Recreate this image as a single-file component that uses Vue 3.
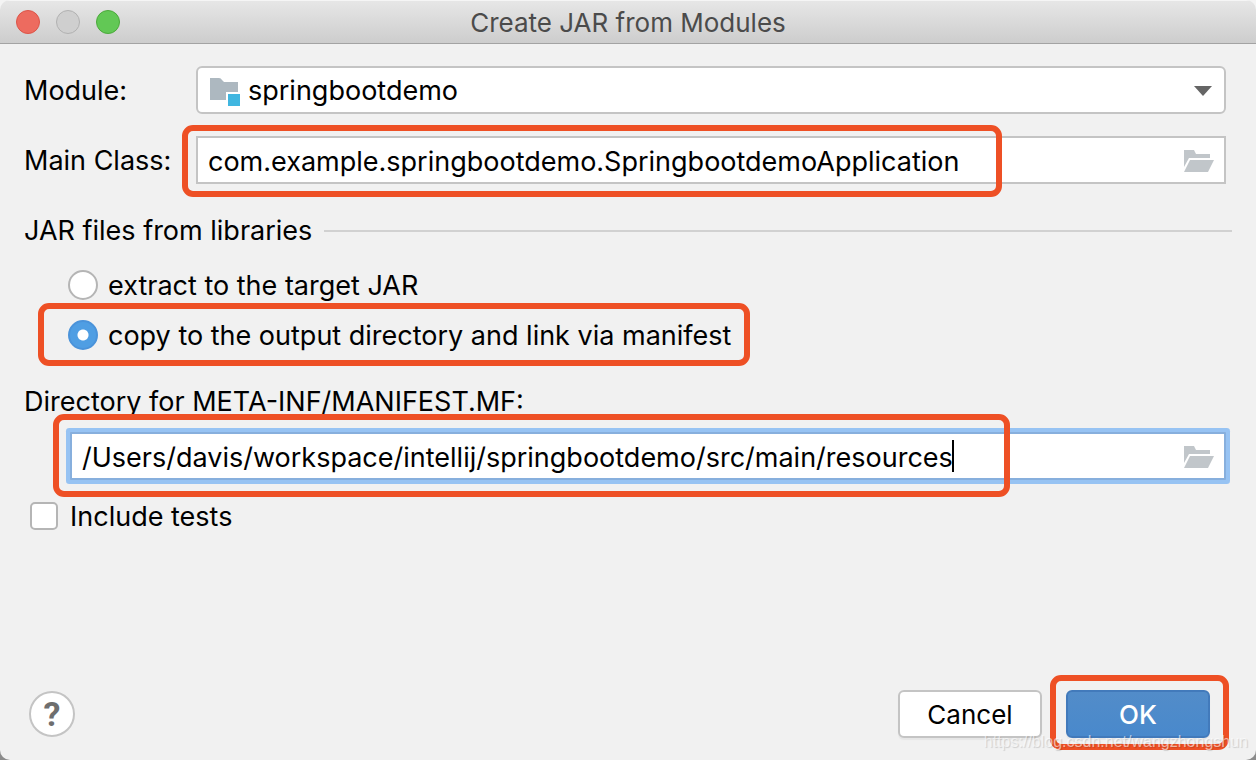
<script setup>
import { ref } from 'vue'

const moduleName = ref('springbootdemo')
const mainClass = ref('com.example.springbootdemo.SpringbootdemoApplication')
const libraryMode = ref('copy')
const manifestDir = ref('/Users/davis/workspace/intellij/springbootdemo/src/main/resources')
const includeTests = ref(false)
</script>

<template>
  <main class="dialog">
    <header class="titlebar">
      <div class="lights">
        <button class="light close" aria-label="Close"></button>
        <button class="light minimize" aria-label="Minimize" disabled></button>
        <button class="light zoom" aria-label="Zoom"></button>
      </div>
      <h1>Create JAR from Modules</h1>
    </header>

    <form class="content" @submit.prevent>
      <div class="row">
        <label for="module">Module:</label>
        <div class="control">
          <select id="module" v-model="moduleName" class="field combo">
            <option>springbootdemo</option>
          </select>
          <svg class="module-icon" viewBox="0 0 30 28" aria-hidden="true">
            <path d="M0 0H9Q11 0 12 2L14 4H28V14H16V22H0Z" fill="#adb8c0" />
            <rect x="18" y="16" width="12" height="12" fill="#40b6e0" />
          </svg>
          <svg class="arrow" viewBox="0 0 18 10" aria-hidden="true">
            <path d="M0 0H18L9 10Z" fill="#656565" />
          </svg>
        </div>
      </div>

      <div class="row">
        <label for="main-class">Main Class:</label>
        <div class="control">
          <input id="main-class" v-model="mainClass" class="field" type="text" spellcheck="false" />
          <button class="browse" type="button" aria-label="Browse main class">
            <svg viewBox="0 0 30 22" aria-hidden="true">
              <path d="M0 0H10L12 4H26V8H5L0 17Z" />
              <path d="M6 10H30L24 22H0Z" />
            </svg>
          </button>
          <span class="mark mark-class"></span>
        </div>
      </div>

      <fieldset class="libraries">
        <legend class="section"><span>JAR files from libraries</span></legend>
        <div class="option">
          <input id="extract" v-model="libraryMode" type="radio" name="mode" value="extract" />
          <label for="extract">extract to the target JAR</label>
        </div>
        <div class="option">
          <input id="copy" v-model="libraryMode" type="radio" name="mode" value="copy" />
          <label for="copy">copy to the output directory and link via manifest</label>
          <span class="mark mark-option"></span>
        </div>
      </fieldset>

      <label class="dir-label" for="manifest-dir">Directory for META-INF/MANIFEST.MF:</label>
      <div class="control dir">
        <input id="manifest-dir" v-model="manifestDir" class="field focused" type="text" spellcheck="false" />
        <span class="caret"></span>
        <button class="browse" type="button" aria-label="Browse directory">
          <svg viewBox="0 0 30 22" aria-hidden="true">
            <path d="M0 0H10L12 4H26V8H5L0 17Z" />
            <path d="M6 10H30L24 22H0Z" />
          </svg>
        </button>
        <span class="mark mark-dir"></span>
      </div>

      <div class="tests">
        <input id="tests" v-model="includeTests" type="checkbox" />
        <label for="tests">Include tests</label>
      </div>

      <footer class="footer">
        <button class="help" type="button" aria-label="Help">?</button>
        <div class="actions">
          <button class="button" type="button">Cancel</button>
          <div class="primary">
            <button class="button ok" type="submit">OK</button>
            <span class="mark mark-ok"></span>
          </div>
        </div>
      </footer>
    </form>
    <span class="watermark">https://blog.csdn.net/wangzhongshun</span>
  </main>
</template>

<style>
body {
  background: linear-gradient(#f4f4f4 50%, #8c8c8c 50%);
}
</style>

<style scoped>
.dialog,
.dialog * {
  box-sizing: border-box;
}

.dialog {
  position: relative;
  display: flex;
  flex-direction: column;
  min-height: 100vh;
  overflow: hidden;
  border-radius: 10px;
  background: #f1f1f1;
  color: #000;
  font: 27px/32px Inter, "Liberation Sans", sans-serif;
}

button,
input,
select {
  margin: 0;
  padding: 0;
  font: inherit;
  color: inherit;
}

.titlebar {
  display: grid;
  grid-template-columns: 1fr auto 1fr;
  align-items: center;
  height: 44px;
  padding: 0 16px;
  border-bottom: 1px solid #a3a3a3;
  background: linear-gradient(#e7e7e7, #cdcdcd);
  box-shadow: inset 0 1px #f5f5f5;
}

.titlebar h1 {
  margin: 0;
  padding-top: 2px;
  font: 26px/32px Inter, "Liberation Sans", sans-serif;
  color: #4b4b4b;
}

.lights {
  display: flex;
  gap: 16px;
}

.light {
  width: 24px;
  height: 24px;
  border: 1px solid;
  border-radius: 50%;
}

.close {
  border-color: #dc5448;
  background: #ed6b5f;
}

.minimize {
  border-color: #b1b1b1;
  background: #cfcfcf;
}

.zoom {
  border-color: #4ba93b;
  background: #62c855;
}

.content {
  display: flex;
  flex: 1;
  flex-direction: column;
  padding: 22px 24px;
}

.row {
  display: grid;
  grid-template-columns: 172px 1fr;
  align-items: center;
  margin: 0 6px 22px 0;
}

.row label,
.option label,
.tests label {
  padding-top: 2px;
}

.control {
  position: relative;
  display: flex;
}

.field {
  flex: 1;
  min-width: 0;
  height: 48px;
  padding: 2px 60px 0 10px;
  border: 2px solid #c4c4c4;
  border-radius: 0;
  outline: none;
  background: #fff;
}

.combo {
  appearance: none;
  padding-left: 50px;
  border-radius: 6px;
}

.module-icon {
  position: absolute;
  left: 14px;
  top: 12px;
  width: 30px;
  height: 28px;
  pointer-events: none;
}

.arrow {
  position: absolute;
  right: 14px;
  top: 20px;
  width: 18px;
  height: 10px;
  pointer-events: none;
}

.browse {
  position: absolute;
  right: 12px;
  top: 14px;
  width: 30px;
  height: 22px;
  border: 0;
  background: none;
}

.browse svg {
  display: block;
  width: 30px;
  height: 22px;
  fill: #c1c6ca;
}

.libraries {
  min-width: 0;
  margin: 0;
  padding: 0;
  border: 0;
}

.section {
  display: flex;
  align-items: center;
  gap: 12px;
  width: 100%;
  height: 50px;
  margin-bottom: 4px;
  padding: 0;
}

.section::after {
  content: "";
  flex: 1;
  height: 2px;
  background: #d1d1d1;
}

.option {
  position: relative;
  display: flex;
  align-items: center;
  gap: 10px;
  width: fit-content;
  height: 50px;
  margin-left: 44px;
}

.option input {
  appearance: none;
  width: 30px;
  height: 30px;
  border: 2px solid #b5b5b5;
  border-radius: 50%;
  background: #fff;
}

.option input:checked {
  border-color: #4a93da;
  background: radial-gradient(circle, #fff 5px, #4f9ee3 6px);
}

.dir-label {
  margin-top: 26px;
}

.dir {
  margin: 14px 6px 0 46px;
}

.focused {
  border-color: #87afdd;
  box-shadow: 0 0 0 4px #97c3f3;
  border-radius: 1px;
}

.caret {
  position: absolute;
  left: 882px;
  top: 8px;
  width: 2px;
  height: 32px;
  background: #000;
}

.tests {
  display: flex;
  align-items: center;
  gap: 12px;
  margin: 19px 0 0 6px;
}

.tests input {
  appearance: none;
  width: 28px;
  height: 28px;
  border: 2px solid #b5b5b5;
  border-radius: 5px;
  background: #fff;
}

.footer {
  display: flex;
  justify-content: space-between;
  align-items: center;
  margin-top: auto;
  padding: 0 22px 0 5px;
}

.help {
  width: 46px;
  height: 46px;
  border: 2px solid #c4c4c4;
  border-radius: 50%;
  background: #fff;
  color: #6e6e6e;
  font: 700 34px/40px Roboto, sans-serif;
}

.actions {
  display: flex;
  gap: 24px;
}

.primary {
  position: relative;
}

.button {
  width: 144px;
  height: 48px;
  padding-top: 2px;
  border: 2px solid #c4c4c4;
  border-radius: 6px;
  background: #fff;
  box-shadow: 0 2px 1px #e6e6e6;
  font-size: 26px;
}

.ok {
  border-color: #427abb;
  background: linear-gradient(#528cc9, #4989cc);
  color: #fff;
  font-weight: 500;
}

.mark {
  position: absolute;
  border: 6px solid #ee5025;
  border-radius: 11px;
  pointer-events: none;
}

.mark-class {
  left: -14px;
  top: -11px;
  bottom: -13px;
  width: 820px;
}

.mark-option {
  inset: -7px -19px -6px -30px;
}

.mark-dir {
  left: -17px;
  top: -18px;
  bottom: -17px;
  width: 957px;
}

.mark-ok {
  inset: -15px -19px -12px -16px;
}

.watermark {
  position: absolute;
  right: 8px;
  bottom: 6px;
  color: rgba(255, 255, 255, 0.6);
  font: 16px/24px "Liberation Sans", sans-serif;
  text-shadow: 1px 1px 1px rgba(0, 0, 0, 0.15);
  pointer-events: none;
}
</style>
